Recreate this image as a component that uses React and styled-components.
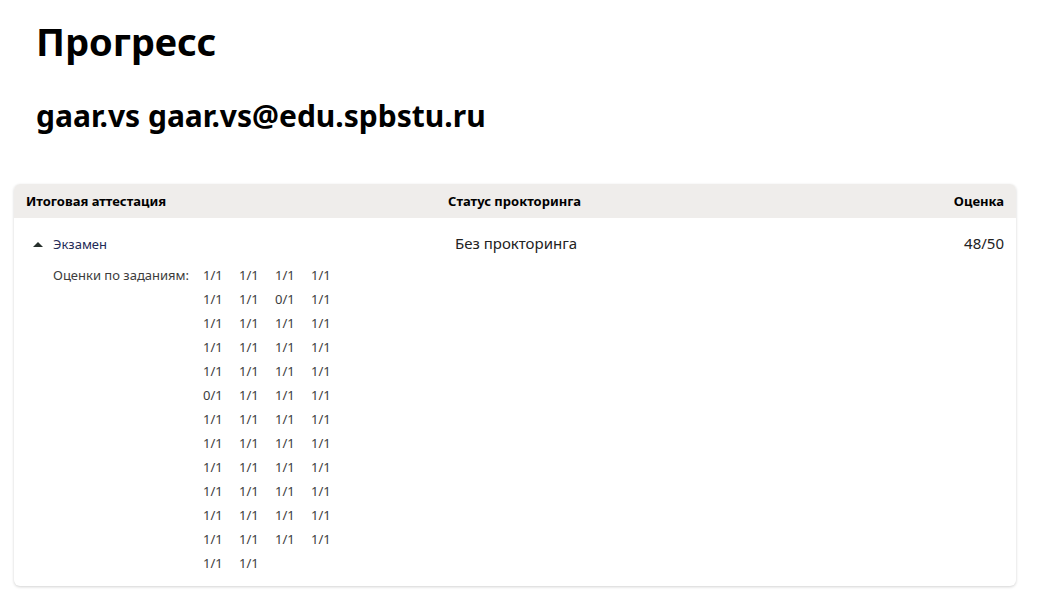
import React from 'react'
import styled, { createGlobalStyle } from 'styled-components'

const GlobalStyle = createGlobalStyle`
    body {
        margin: 0;
        background: #ffffff;
        font-family: "Noto Sans", "Open Sans", sans-serif;
        color: #000000;
    }
`

const Page = styled.div`
    padding: 0 22px 16px 14px;
`

const Heading = styled.div`
    padding: 0 22px;
    > h1 {
        margin: 14px 0 0;
        font-size: 38px;
        line-height: 54px;
        font-weight: 700;
    }
    > h2 {
        margin: 27px 0 0;
        font-size: 30px;
        line-height: 42px;
        font-weight: 700;
    }
`

const Card = styled.div`
    margin-top: 47px;
    border-radius: 6px;
    background: #ffffff;
    box-shadow: 0 1px 3px rgba(0, 0, 0, 0.18);
    overflow: hidden;
    padding-bottom: 11px;
`

const Grid = styled.div`
    display: grid;
    grid-template-columns: 1fr 1fr 160px;
`

const HeaderRow = styled(Grid)`
    background: #efedeb;
    height: 34px;
    align-items: center;
    padding: 0 12px;
    font-size: 13px;
    font-weight: 700;
    > div:nth-child(2) {
        padding-left: 13px;
    }
    > div:last-child {
        text-align: right;
    }
`

const BodyRow = styled(Grid)`
    padding: 15px 12px 0;
    font-size: 15px;
    color: #222222;
    > div:last-child {
        text-align: right;
    }
`

const Title = styled.div`
    display: flex;
    align-items: center;
    gap: 10px;
    padding-left: 7px;
    color: #1f2b57;
    font-size: 13px;
`

const Caret = styled.span`
    width: 0;
    height: 0;
    border-left: 5px solid transparent;
    border-right: 5px solid transparent;
    border-bottom: 5px solid #27302c;
`

const Status = styled.div`
    padding-left: ${({ $indent }) => $indent || 0}px;
    line-height: 24px;
    margin-top: -2px;
`

const Scores = styled.div`
    display: flex;
    padding: 14px 0 0 39px;
    font-size: 13px;
    color: #3c3c3c;
`

const ScoresLabel = styled.div`
    width: 150px;
    line-height: 24px;
    margin-top: -6px;
`

const ScoreGrid = styled.div`
    display: grid;
    grid-template-columns: repeat(4, 36px);
    grid-auto-rows: 24px;
    margin-top: -6px;
    line-height: 24px;
`

const scores = [
    '1/1', '1/1', '1/1', '1/1',
    '1/1', '1/1', '0/1', '1/1',
    '1/1', '1/1', '1/1', '1/1',
    '1/1', '1/1', '1/1', '1/1',
    '1/1', '1/1', '1/1', '1/1',
    '0/1', '1/1', '1/1', '1/1',
    '1/1', '1/1', '1/1', '1/1',
    '1/1', '1/1', '1/1', '1/1',
    '1/1', '1/1', '1/1', '1/1',
    '1/1', '1/1', '1/1', '1/1',
    '1/1', '1/1', '1/1', '1/1',
    '1/1', '1/1', '1/1', '1/1',
    '1/1', '1/1',
]

export default function App() {
    return (
        <Page>
            <GlobalStyle />
            <Heading>
                <h1>Прогресс</h1>
                <h2>gaar.vs gaar.vs@edu.spbstu.ru</h2>
            </Heading>
            <Card>
                <HeaderRow>
                    <div>Итоговая аттестация</div>
                    <div>Статус прокторинга</div>
                    <div>Оценка</div>
                </HeaderRow>
                <BodyRow>
                    <Title>
                        <Caret />
                        <span>Экзамен</span>
                    </Title>
                    <Status $indent={20}>Без прокторинга</Status>
                    <Status>48/50</Status>
                </BodyRow>
                <Scores>
                    <ScoresLabel>Оценки по заданиям:</ScoresLabel>
                    <ScoreGrid>
                        {scores.map((s, i) => (
                            <div key={i}>{s}</div>
                        ))}
                    </ScoreGrid>
                </Scores>
            </Card>
        </Page>
    )
}
